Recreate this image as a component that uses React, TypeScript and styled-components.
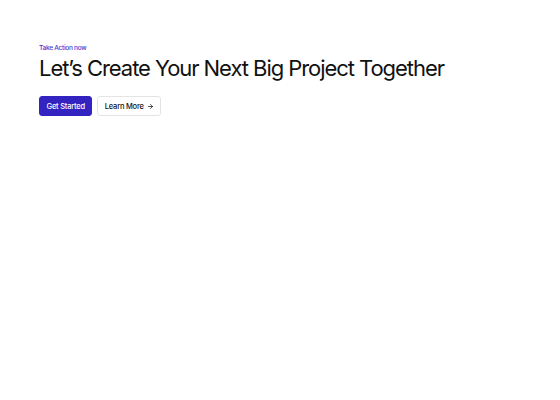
import React from "react";
import styled, { createGlobalStyle } from "styled-components";

const Global = createGlobalStyle`
  html, body { margin: 0; padding: 0; background: #ffffff; }
  body { font-family: Inter, "Noto Sans", sans-serif; color: #111111; }
`;

const Section = styled.section`
  display: flex;
  flex-direction: column;
  align-items: flex-start;
  padding: 44px 39px 0;
`;

const Eyebrow = styled.span`
  font-size: 6.5px;
  font-weight: 500;
  color: #4434cc;
  letter-spacing: -0.04em;
  line-height: 8px;
`;

const Title = styled.h1`
  margin: 2px 0 0;
  font-size: 22px;
  font-weight: 400;
  letter-spacing: -0.048em;
  line-height: 28px;
  color: #111111;
`;

const Actions = styled.div`
  display: flex;
  gap: 5px;
  margin-top: 14px;
`;

const Button = styled.button<{ $primary?: boolean }>`
  display: inline-flex;
  align-items: center;
  gap: 3px;
  height: 20px;
  padding: 0 6.5px;
  border-radius: 3px;
  font-family: Inter, sans-serif;
  font-size: 7.5px;
  font-weight: 500;
  letter-spacing: -0.03em;
  cursor: pointer;
  border: 1px solid ${(p) => (p.$primary ? "#3323c0" : "#e4e4e4")};
  background: ${(p) => (p.$primary ? "#3323c0" : "#ffffff")};
  color: ${(p) => (p.$primary ? "#ffffff" : "#111111")};
`;

export default function App() {
  return (
    <>
      <Global />
      <Section>
        <Eyebrow>Take Action now</Eyebrow>
        <Title>Let’s Create Your Next Big Project Together</Title>
        <Actions>
          <Button $primary>Get Started</Button>
          <Button>
            Learn More
            <svg width="7" height="7" viewBox="0 0 24 24" fill="none" stroke="currentColor" strokeWidth="2.5" strokeLinecap="round" strokeLinejoin="round">
              <path d="M5 12h14" />
              <path d="m12 5 7 7-7 7" />
            </svg>
          </Button>
        </Actions>
      </Section>
    </>
  );
}
